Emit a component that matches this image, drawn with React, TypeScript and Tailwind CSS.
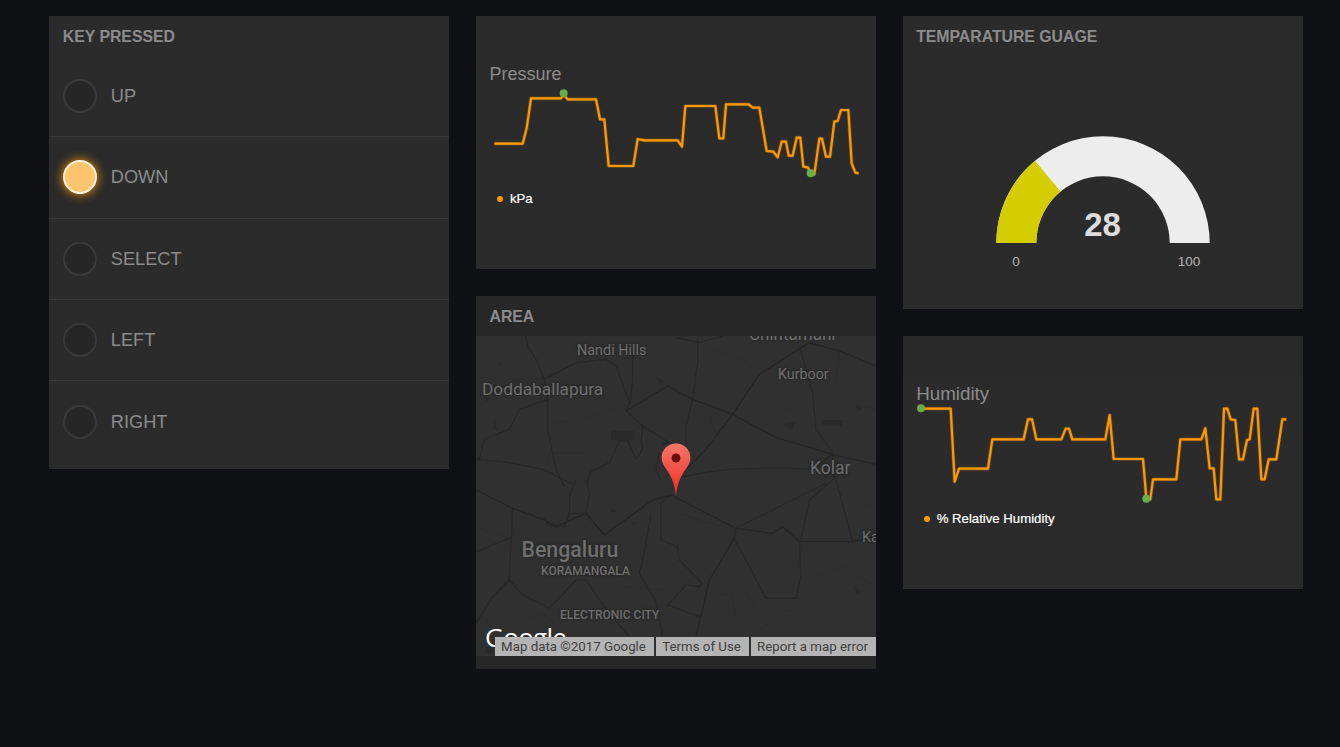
import React from 'react';

const keys = ['UP', 'DOWN', 'SELECT', 'LEFT', 'RIGHT'];

const pressureLine =
  '55,251 140,251 152,205 165,115 255,115 263,104 275,118 360,118 372,178 385,178 398,318 472,318 485,237 505,241 605,241 618,260 628,138 718,138 730,235 742,235 750,133 818,133 830,143 850,143 872,273 892,275 905,292 917,245 930,245 938,287 950,287 962,233 973,233 982,320 995,322 1005,340 1015,343 1030,236 1038,236 1050,290 1062,290 1075,185 1085,183 1095,150 1117,150 1127,310 1138,338 1148,340';

const humidityLine =
  '55,86 143,86 155,305 168,266 255,266 268,178 362,178 375,118 387,118 400,178 475,178 488,146 498,146 508,178 607,178 620,105 632,237 720,237 730,355 742,358 750,298 820,298 832,178 895,178 907,145 920,265 932,265 940,358 952,358 963,86 973,86 983,118 997,120 1008,238 1020,238 1032,180 1040,178 1052,86 1063,86 1075,298 1085,298 1097,238 1120,238 1138,118 1150,118';

const mapLabels = [
  { text: 'Nandi Hills', x: 101, y: 4, size: 'text-[14.4px]' },
  { text: 'Chintamani', x: 273, y: -14, size: 'text-[17px]' },
  { text: 'Kurboor', x: 302, y: 28, size: 'text-[14.3px]' },
  { text: 'Doddaballapura', x: 6, y: 41, size: 'text-[17.3px]' },
  { text: 'Kolar', x: 334, y: 119, size: 'text-[17.500px]' },
  { text: 'Ka', x: 386, y: 191, size: 'text-[14.500px]' },
  { text: 'Bengaluru', x: 45.500, y: 198, size: 'text-[21.300px] font-medium' },
  { text: 'KORAMANGALA', x: 65, y: 226, size: 'text-[12px] font-medium' },
  { text: 'ELECTRONIC CITY', x: 84, y: 270, size: 'text-[12px] font-medium' },
];

const CardTitle = ({ children }: { children: React.ReactNode }) => (
  <div className="h-[40px] px-[13.500px] pt-[11.500px] text-[15.800px] leading-[18px] font-bold text-[#8c8c8c]">{children}</div>
);

const KeyRow = ({ label, on, last }: { label: string; on: boolean; last: boolean }) => (
  <div className={`flex items-center gap-[14px] h-[81.3px] px-[13.500px] ${last ? '' : 'border-b border-[#383838]'}`}>
    {on ? (
      <div className="w-[34px] h-[34px] rounded-full bg-[#ffc46e] border-2 border-[#fff2dc] shadow-[0_0_8px_2px_rgba(255,153,0,0.65)]" />
    ) : (
      <div className="w-[34px] h-[34px] rounded-full bg-[#262626] border-[2.500px] border-[#3a3a3a]" />
    )}
    <span className="pt-[1px] text-[18.200px] text-[#8c8c8c]">{label}</span>
  </div>
);

const LineCard = ({
  title,
  titleClass,
  legend,
  line,
  dots,
  header,
}: {
  title: string;
  titleClass: string;
  legend: string;
  line: string;
  dots: number[][];
  header?: boolean;
}) => (
  <div className="relative w-[400px] h-[253px] bg-[#2b2b2b] pt-[48px]">
    {header && <div className="absolute top-0 left-0 right-0 h-[40px] bg-[#292929]" />}
    <div className={`px-[13.500px] leading-5 text-[#8c8c8c] ${titleClass}`}>{title}</div>
    <svg viewBox="0 72 1200 306" className="w-[400px] h-[102px] overflow-visible">
      <polyline points={line} fill="none" stroke="#ff9900" strokeOpacity="0.28" strokeWidth="11" strokeLinejoin="round" />
      <polyline points={line} fill="none" stroke="#ff9900" strokeWidth="6.500" strokeLinejoin="round" />
      {dots.map(([x, y]) => (
        <circle key={x} cx={x} cy={y} r="12" fill="#69ad49" />
      ))}
    </svg>
    <div className="flex items-center gap-[7px] mt-[5px] pl-[21px] text-[13.200px] leading-4 text-white [-webkit-text-stroke:0.2px_white]">
      <span className="w-[6px] h-[6px] rounded-full bg-[#ff9900]" />
      <span>{legend}</span>
    </div>
  </div>
);

const MapRoads = () => (
  <svg viewBox="0 0 1200 960" className="absolute inset-0 w-[400px] h-[320px]" fill="none">
    <g transform="translate(0,-120)" stroke="#272727" strokeWidth="3.500" strokeLinejoin="round">
      <path d="M150 120 155 150 180 190 205 250 215 310 215 400 240 520 265 570" />
      <path d="M665 130 665 200 650 310 630 390 630 440" />
      <path d="M205 250 300 200 390 190 420 210 460 320 450 350" />
      <path d="M470 170 470 250 462 325" />
      <path d="M450 345 575 270 650 310 770 355 900 425 1070 475 1075 552" stroke="#252525" strokeWidth="4" />
      <path d="M1200 210 1090 165 1000 140 850 235 770 355 690 460 610 540" stroke="#252525" strokeWidth="4" />
      <path d="M970 150 1010 290 1020 400 1070 470" />
      <path d="M1070 475 1200 505" />
      <path d="M450 345 500 390 580 440M500 390 495 435 500 460 480 490 455 435 430 435 400 500 340 530 335 570" />
      <path d="M215 310 130 340 100 400 25 430 10 490" />
      <path d="M0 490 100 500 200 520 290 565" />
      <path d="M1070 475 1010 520 900 515 760 520 680 530 610 545" />
      <path d="M600 125 670 140 740 120" />
      <path d="M550 470 540 520 555 555" />
      <path d="M580 440 560 445" />
      <g stroke="#2c2c2c" strokeWidth="2">
        <path d="M30 300 120 250 205 250M700 160 800 190 850 235M1090 165 1080 260 1150 330 1200 340M220 380 330 370 430 330" />
        <path d="M330 470 220 470 200 540M700 350 720 420 680 470M900 320 980 360 1020 400" />
      </g>
      <g fill="#2a2a2a" stroke="none">
        <path d="M405 405h70v28h-70zM1040 372h60l-5 18h-55zM918 385l38-5-5 22zM540 245l20 8-5 10zM55 372l10 30-12-2zM1140 325l18 12-12 8z" />
        <path d="M65 200l12 5-8 8zM20 300l20 5-10 12z" />
      </g>
    </g>
    <g transform="translate(0,432)" stroke="#272727" strokeWidth="3.500" strokeLinejoin="round">
      <path d="M0 30 110 85 205 120 240 140 330 100 385 165 530 60 585 45 780 145 890 160 920 140 970 185 1130 185 1200 170" stroke="#252525" strokeWidth="4" />
      <path d="M110 85 100 300 140 345 220 385 300 300 330 300 395 395 460 470" />
      <path d="M585 45 555 70 555 180 605 200 610 240 680 310 670 320 630 315 575 375 670 410" />
      <path d="M780 145 775 175 700 300 660 470" stroke="#252525" strokeWidth="4" />
      <path d="M775 175 870 355 960 355 975 290 970 185" />
      <path d="M975 180 1000 60 1070 0" />
      <path d="M525 100 500 240 490 280 540 365 560 470" />
      <path d="M300 0 280 50 280 100 330 100 340 40 330 0M205 110 215 135 265 140 280 100" />
      <path d="M100 300 50 350 0 430M0 215 100 175" />
      <path d="M780 145 1050 10M1080 0 1130 185" />
      <g stroke="#2c2c2c" strokeWidth="2">
        <path d="M0 140 110 180M610 100 700 130 780 145M1000 300 1100 260 1200 320M730 340 770 350 780 420M900 400 950 390 985 430M850 450 880 430" />
        <path d="M120 430 200 400 250 440M560 330 430 320M1150 60 1200 90M800 320 850 400" />
      </g>
      <g fill="#2a2a2a" stroke="none">
        <path d="M1135 320l18 12-10 12zM405 88l14 4-8 6zM470 125l10 4-8 6zM530 55l12 6-8 5zM30 500h22v20H25z" />
      </g>
    </g>
  </svg>
);

const App: React.FC = () => {
  return (
    <div className="flex items-start gap-[26.67px] w-full min-h-screen bg-[#0f1114] pl-[49.33px] pt-4 font-['Liberation_Sans',Arial,sans-serif]">
      {/* Key pressed */}
      <div className="w-[400px] h-[453px] bg-[#2b2b2b]">
        <CardTitle>KEY PRESSED</CardTitle>
        {keys.map((k, i) => (
          <KeyRow key={k} label={k} on={k === 'DOWN'} last={i === keys.length - 1} />
        ))}
      </div>

      {/* Pressure + map */}
      <div className="flex flex-col gap-[27px]">
        <LineCard title="Pressure" titleClass="text-[18px]" legend="kPa" line={pressureLine} dots={[[263, 100], [1004, 340]]} />
        <div className="w-[400px] h-[373px] bg-[#272727]">
          <CardTitle>AREA</CardTitle>
          <div className="relative w-[400px] h-[320px] overflow-hidden bg-[#303030] font-['Roboto',sans-serif]">
            <MapRoads />
            {mapLabels.map((l) => (
              <span
                key={l.text}
                style={{ left: l.x, top: l.y }}
                className={`absolute whitespace-nowrap text-[#6f6f6f] [text-shadow:0_0_3px_#1f1f1f] ${l.size}`}
              >
                {l.text}
              </span>
            ))}
            {/* marker */}
            <svg viewBox="0 0 30 54" className="absolute left-[185px] top-[107px] w-[30px] h-[54px]">
              <defs>
                <linearGradient id="pin" x1="0" y1="0" x2="0" y2="1">
                  <stop offset="0" stopColor="#f7776c" />
                  <stop offset="1" stopColor="#ee2a1e" />
                </linearGradient>
              </defs>
              <path d="M15 .5C7 .5.6 6.700.6 14.600c0 4.300 1.700 7.600 4.500 11.400C9 31.400 13.400 38 15 53c1.600-15 6-21.600 9.900-27 2.800-3.800 4.500-7.100 4.500-11.400C29.400 6.700 23 .5 15 .5z" fill="url(#pin)" />
              <circle cx="15" cy="15" r="4.500" fill="#6a0f0c" />
            </svg>
            <span className="absolute left-[9px] top-[283px] text-[26px] leading-[36px] font-medium font-['Open_Sans',sans-serif] text-white tracking-[-0.7px]">Google</span>
            <div className="absolute right-0 bottom-0 flex gap-[2px] h-[19px] text-[13.300px] leading-[19px] text-[#404040]">
              <span className="w-[159px] pr-[2px] text-center bg-[#b4b4b4]">Map data ©2017 Google</span>
              <span className="w-[93px] pr-[2px] text-center bg-[#b4b4b4]">Terms of Use</span>
              <span className="w-[125px] pr-[2px] text-center bg-[#b4b4b4]">Report a map error</span>
            </div>
          </div>
        </div>
      </div>

      {/* Gauge + humidity */}
      <div className="flex flex-col gap-[27px]">
        <div className="w-[400px] h-[293px] bg-[#2b2b2b]">
          <CardTitle>TEMPARATURE GUAGE</CardTitle>
          <svg viewBox="0 0 400 253" className="w-[400px] h-[253px]">
            <g transform="translate(200,187)">
              <path d="M-106.700 0A106.700 106.700 0 0 1 106.700 0H66.700A66.700 66.700 0 0 0-66.700 0z" fill="#eeedee" />
              <path d="M-106.700 0A106.700 106.700 0 0 1-68 -82.200L-42.500 -51.400A66.700 66.700 0 0 0-66.700 0z" fill="#d6cd00" />
              <text x="-0.500" y="-7" textAnchor="middle" className="text-[33px] font-bold fill-[#dddddd]">28</text>
              <text x="-87" y="23" textAnchor="middle" className="text-[13.500px] fill-[#b4b4b4]">0</text>
              <text x="86" y="23" textAnchor="middle" className="text-[13.500px] fill-[#b4b4b4]">100</text>
            </g>
          </svg>
        </div>
        <LineCard title="Humidity" titleClass="text-[18.800px]" legend="% Relative Humidity" line={humidityLine} dots={[[54, 85], [730, 356]]} header />
      </div>
    </div>
  );
};

export default App;
